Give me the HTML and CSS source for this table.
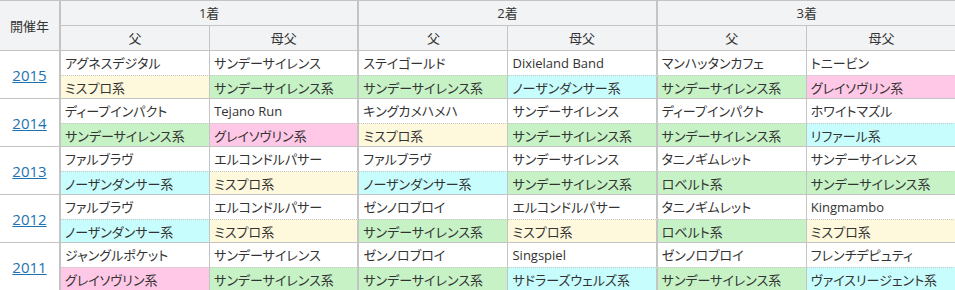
FILE: index.html
```html
<!DOCTYPE html>
<html lang="ja">
<head>
<meta charset="utf-8">
<title>血統傾向</title>
<link rel="stylesheet" href="styles.css">
</head>
<body>
<table class="tbl">
  <thead>
    <tr class="h1">
      <th class="year-h" rowspan="2">開催年</th>
      <th class="grp" colspan="2">1着</th>
      <th class="grp" colspan="2">2着</th>
      <th class="grp last" colspan="2">3着</th>
    </tr>
    <tr class="h2">
      <th class="f">父</th><th class="m">母父</th>
      <th class="f">父</th><th class="m">母父</th>
      <th class="f">父</th><th class="m last">母父</th>
    </tr>
  </thead>
  <tbody>
    <tr class="nm">
      <td class="year" rowspan="2"><a href="#">2015</a></td>
      <td class="f">アグネスデジタル</td><td class="m">サンデーサイレンス</td>
      <td class="f">ステイゴールド</td><td class="m">Dixieland Band</td>
      <td class="f">マンハッタンカフェ</td><td class="m last">トニービン</td>
    </tr>
    <tr class="ln">
      <td class="f mp">ミスプロ系</td><td class="m ss">サンデーサイレンス系</td>
      <td class="f ss">サンデーサイレンス系</td><td class="m nd">ノーザンダンサー系</td>
      <td class="f ss">サンデーサイレンス系</td><td class="m last gs">グレイソヴリン系</td>
    </tr>
    <tr class="nm">
      <td class="year" rowspan="2"><a href="#">2014</a></td>
      <td class="f">ディープインパクト</td><td class="m">Tejano Run</td>
      <td class="f">キングカメハメハ</td><td class="m">サンデーサイレンス</td>
      <td class="f">ディープインパクト</td><td class="m last">ホワイトマズル</td>
    </tr>
    <tr class="ln">
      <td class="f ss">サンデーサイレンス系</td><td class="m gs">グレイソヴリン系</td>
      <td class="f mp">ミスプロ系</td><td class="m ss">サンデーサイレンス系</td>
      <td class="f ss">サンデーサイレンス系</td><td class="m last nd">リファール系</td>
    </tr>
    <tr class="nm">
      <td class="year" rowspan="2"><a href="#">2013</a></td>
      <td class="f">ファルブラヴ</td><td class="m">エルコンドルパサー</td>
      <td class="f">ファルブラヴ</td><td class="m">サンデーサイレンス</td>
      <td class="f">タニノギムレット</td><td class="m last">サンデーサイレンス</td>
    </tr>
    <tr class="ln">
      <td class="f nd">ノーザンダンサー系</td><td class="m mp">ミスプロ系</td>
      <td class="f nd">ノーザンダンサー系</td><td class="m ss">サンデーサイレンス系</td>
      <td class="f ss">ロベルト系</td><td class="m last ss">サンデーサイレンス系</td>
    </tr>
    <tr class="nm">
      <td class="year" rowspan="2"><a href="#">2012</a></td>
      <td class="f">ファルブラヴ</td><td class="m">エルコンドルパサー</td>
      <td class="f">ゼンノロブロイ</td><td class="m">エルコンドルパサー</td>
      <td class="f">タニノギムレット</td><td class="m last">Kingmambo</td>
    </tr>
    <tr class="ln">
      <td class="f nd">ノーザンダンサー系</td><td class="m mp">ミスプロ系</td>
      <td class="f ss">サンデーサイレンス系</td><td class="m mp">ミスプロ系</td>
      <td class="f ss">ロベルト系</td><td class="m last mp">ミスプロ系</td>
    </tr>
    <tr class="nm">
      <td class="year" rowspan="2"><a href="#">2011</a></td>
      <td class="f">ジャングルポケット</td><td class="m">サンデーサイレンス</td>
      <td class="f">ゼンノロブロイ</td><td class="m">Singspiel</td>
      <td class="f">ゼンノロブロイ</td><td class="m last">フレンチデピュティ</td>
    </tr>
    <tr class="ln">
      <td class="f gs">グレイソヴリン系</td><td class="m ss">サンデーサイレンス系</td>
      <td class="f ss">サンデーサイレンス系</td><td class="m nd">サドラーズウェルズ系</td>
      <td class="f ss">サンデーサイレンス系</td><td class="m last nd">ヴァイスリージェント系</td>
    </tr>
  </tbody>
</table>
</body>
</html>
```
FILE: styles.css
```css
html, body {
  margin: 0;
  padding: 0;
  overflow: hidden;
  background: #ffffff;
}

body {
  font-family: "Open Sans", "Noto Sans CJK JP", sans-serif;
  font-size: 13px;
  color: #333333;
  font-feature-settings: "palt";
}

.tbl {
  border-collapse: separate;
  border-spacing: 0;
  table-layout: fixed;
  width: 956px;
  border-top: 1px solid #c4c4c4;
}

.tbl th,
.tbl td {
  box-sizing: border-box;
  padding: 0 4px;
  border-bottom: 1px solid #c4c4c4;
  line-height: 18px;
  white-space: nowrap;
  overflow: hidden;
}

.tbl th {
  background: #f2f3f5;
  font-weight: normal;
  text-align: center;
}

.h1 th {
  height: 25px;
}

.h2 th {
  height: 25px;
}

.year-h {
  width: 61px;
  border-right: 2px solid #c4c4c4;
}

.grp {
  border-right: 2px solid #c4c4c4;
}

.grp.last,
.last {
  border-right: 0;
}

.h2 .f { width: 149px; }
.h2 .m { width: 150px; }
.h2 .m.last { width: 148px; }

.f {
  border-right: 1px solid #c4c4c4;
}

.m {
  border-right: 2px solid #c4c4c4;
}

.tbl td.m.last,
.tbl th.m.last {
  border-right: 0;
}

.nm td {
  height: 24px;
  border-bottom: 0;
}

.nm td.year {
  border-bottom: 1px solid #c4c4c4;
  border-right: 2px solid #c4c4c4;
  text-align: center;
  font-size: 15px;
}

.ln td {
  height: 24px;
  border-top: 1px dotted #c8c8c8;
  padding-top: 1px;
}

.year a {
  color: #1b73b3;
  text-decoration: underline;
}

.mp { background: #fef8dc; }
.ss { background: #c6f2c6; }
.nd { background: #c8fdfd; }
.gs { background: #ffc8e6; }
```
